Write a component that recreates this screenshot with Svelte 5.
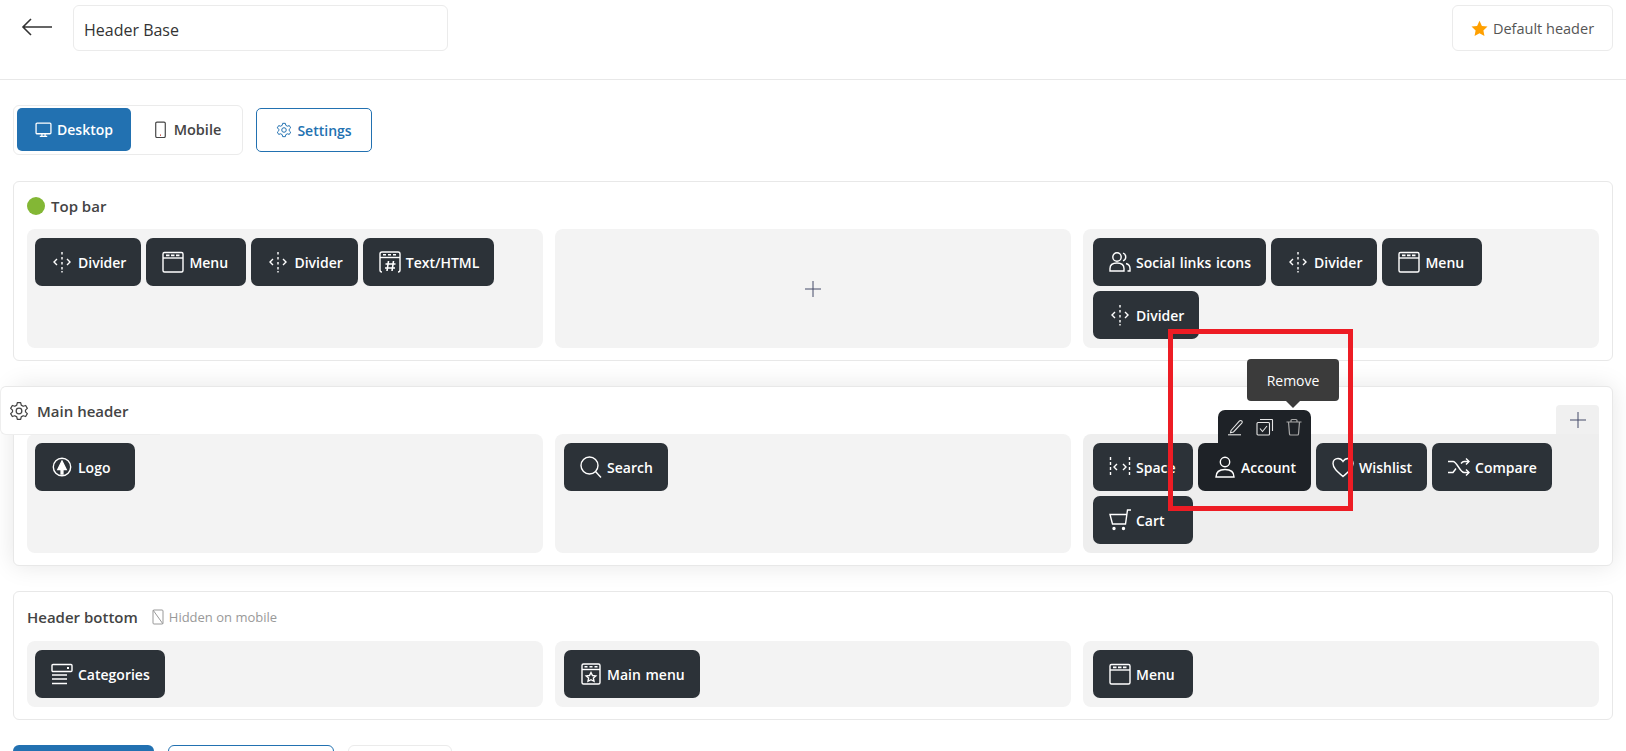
<script>
  // inner svg markup per icon, all on a 24 box
  const icons = {
    divider: '<path d="M12 2v2.5M12 7v2.5M12 12v2.5M12 17v2.5M12 21v1.5" /><path d="M7 9l-3 3 3 3M17 9l3 3-3 3" />',
    menu: '<rect x="2" y="2.500" width="20" height="19.500" rx="1.500" /><path d="M2 8h20" /><path d="M5 5.300h3.500M10 5.300h3.500M15 5.300h3.500" stroke-width="1.800" />',
    text: '<path d="M4 22c-1 0-2-.8-2-2V4c0-1 .8-2 2-2h16c1 0 2 .8 2 2v16c0 1-.8 2-2 2" /><path d="M2 7.500h20" /><path d="M5 4.800h3M10 4.800h3M15 4.800h3" stroke-width="1.500" /><path d="M10.500 11l-1.500 10M15.500 11l-1.500 10M7.500 14h10M7 18h10" stroke-width="1.600" />',
    social: '<circle cx="9" cy="7" r="4.200" /><path d="M2 21v-2.500c0-3.300 2.700-5.500 7-5.500s7 2.200 7 5.500V21z" /><path d="M15 3.200a4 4 0 0 1 0 7.600M18 13.500c2.500.7 4 2.600 4 5V21h-2.500" />',
    logo: '<circle cx="12" cy="12" r="8.700" /><path d="M12 6l-4.200 8.500h3.300V19h1.800v-4.500h3.300z" fill="currentColor" />',
    search: '<circle cx="10.500" cy="10.500" r="8.500" /><path d="M16.500 16.500l5.500 6" />',
    space: '<path d="M2.500 2v20M21.500 2v20" stroke-dasharray="3 2" /><path d="M9 9l-3 3 3 3M15 9l3 3-3 3" />',
    account: '<circle cx="12" cy="7" r="4.700" /><path d="M3 22c0-5 3.500-7.500 9-7.500s9 2.500 9 7.500z" />',
    wishlist: '<path d="M12 21.500C6 16.500 2 13 2 8.500 2 5.500 4.300 3.500 7 3.500c2 0 3.800 1 5 3 1.200-2 3-3 5-3 2.700 0 5 2 5 5 0 4.500-4 8-10 13z" />',
    compare: '<path d="M1 6.500h5c4 0 7 11 11 11h5M1 17.500h5l3-4M14 8.500c1-1.200 2-2 3-2h5" /><path d="M19 3.500l3 3-3 3M19 14.500l3 3-3 3" />',
    cart: '<path d="M23 2h-3.500l-2 14H4.500L2 6.500h16.500" /><circle cx="6" cy="20.500" r="1" fill="currentColor" /><circle cx="15.500" cy="20.500" r="1" fill="currentColor" />',
    categories: '<rect x="2" y="2.500" width="20" height="7" rx="1" /><path d="M17 6h2" stroke-width="2" /><path d="M2 13h15M2 17h15M2 21.500h15" stroke-width="1.600" />',
    mainmenu: '<rect x="3" y="2" width="18" height="20" rx="1.500" /><path d="M3 7.500h18" /><path d="M5.500 4.800h3M10.500 4.800h3M15.500 4.800h3" stroke-width="1.500" /><path d="M12 10.500l1.500 3 3.300.4-2.400 2.200.6 3.200-3-1.600-3 1.600.6-3.200-2.400-2.200 3.300-.4z" />'
  };

  const chip = (label, icon, active = false) => ({ label, icon, active });

  const rows = [
    {
      title: 'Top bar',
      kind: 'dot',
      zones: [
        [chip('Divider', 'divider'), chip('Menu', 'menu'), chip('Divider', 'divider'), chip('Text/HTML', 'text')],
        [],
        [chip('Social links icons', 'social'), chip('Divider', 'divider'), chip('Menu', 'menu'), chip('Divider', 'divider')]
      ]
    },
    {
      title: 'Main header',
      kind: 'gear',
      zones: [
        [chip('Logo', 'logo')],
        [chip('Search', 'search')],
        [chip('Space', 'space'), chip('Account', 'account', true), chip('Wishlist', 'wishlist'), chip('Compare', 'compare'), chip('Cart', 'cart')]
      ]
    },
    {
      title: 'Header bottom',
      kind: 'hidden',
      zones: [
        [chip('Categories', 'categories')],
        [chip('Main menu', 'mainmenu')],
        [chip('Menu', 'menu')]
      ]
    }
  ];
</script>

{#snippet gear(size)}
  <svg width={size} height={size} viewBox="0 0 24 24" fill="none" stroke="currentColor" stroke-width="1.500" stroke-linejoin="round">
    <path d="M10 2h4l.7 3 2.300 1.300 3-.9 2 3.400-2.200 2.100v2.200l2.200 2.100-2 3.400-3-.9-2.300 1.300-.7 3h-4l-.7-3L7 17.700l-3 .9-2-3.400 2.200-2.100V11L2 8.800l2-3.400 3 .9L9.300 5z" />
    <circle cx="12" cy="12" r="3.400" />
  </svg>
{/snippet}

{#snippet plus(size)}
  <svg width={size} height={size} viewBox="0 0 16 16" fill="none" stroke="#454a68" stroke-width="1">
    <path d="M8 0v16M0 8h16" />
  </svg>
{/snippet}

<div class="page">
  <header class="topbar">
    <button class="back" aria-label="Back">
      <svg width="32" height="20" viewBox="0 0 32 20" fill="none" stroke="#333" stroke-width="1.600">
        <path d="M31 10H2M10 2l-8 8 8 8" />
      </svg>
    </button>
    <input class="name" value="Header Base" />
    <button class="default">
      <svg width="17" height="17" viewBox="0 0 24 24" fill="#ffa000">
        <path d="M12 1l3.400 7.300 7.900 1-5.800 5.500 1.500 7.900-7-3.900-7 3.900 1.500-7.900L.7 9.300l7.900-1z" />
      </svg>
      Default header
    </button>
  </header>

  <main class="content">
    <div class="toolbar">
      <div class="tabs">
        <button class="tab on">
          <svg width="17" height="17" viewBox="0 0 16 16" fill="none" stroke="currentColor" stroke-width="1.200">
            <rect x="1" y="2" width="14" height="10" rx="1" />
            <path d="M6.500 12v2M9.500 12v2M4.500 14.500h7" />
          </svg>
          Desktop
        </button>
        <button class="tab">
          <svg width="17" height="17" viewBox="0 0 16 16" fill="none" stroke="#444" stroke-width="1.100">
            <rect x="3.500" y="1" width="9" height="14.500" rx="1.200" />
            <path d="M7.500 13.300h1" stroke="#c0392b" stroke-width="1.200" />
          </svg>
          Mobile
        </button>
      </div>
      <button class="settings">
        {@render gear(16)}
        Settings
      </button>
    </div>

    {#each rows as row}
      <section class="card" class:raised={row.kind === 'gear'}>
        <div class="title" class:tab-title={row.kind === 'gear'} class:tall={row.kind === 'hidden'}>
          {#if row.kind === 'dot'}
            <span class="dot"></span>
          {:else if row.kind === 'gear'}
            {@render gear(20)}
          {/if}
          <span>{row.title}</span>
          {#if row.kind === 'hidden'}
            <span class="note">
              <svg width="14" height="16" viewBox="0 0 14 16" fill="none" stroke="#999" stroke-width="1">
                <rect x="2" y="1" width="10" height="14" rx="1" />
                <path d="M2 1l10 14" />
              </svg>
              Hidden on mobile
            </span>
          {/if}
        </div>
        <div class="zones">
          {#each row.zones as zone, i}
            <div class="zone" class:empty={zone.length === 0} class:hover={row.kind === 'gear' && i === 2}>
              {#if zone.length === 0}
                {@render plus(16)}
              {/if}
              {#each zone as item}
                <div class="chip" class:active={item.active}>
                  <svg class="ico" width="24" height="24" viewBox="0 0 24 24" fill="none" stroke="currentColor" stroke-width="1.400">
                    {@html icons[item.icon]}
                  </svg>
                  <span>{item.label}</span>
                  {#if item.active}
                    <div class="tools">
                      <svg width="18" height="18" viewBox="0 0 18 18" fill="none" stroke="#e6e6e6" stroke-width="1.100">
                        <path d="M4 12.500L12.500 3c.7-.7 1.700-.7 2.300 0 .6.600.6 1.500 0 2.200L6.500 14l-3 .8z" />
                        <path d="M1 16.800h13" />
                      </svg>
                      <svg width="18" height="18" viewBox="0 0 18 18" fill="none" stroke="#e6e6e6" stroke-width="1.100">
                        <rect x="1" y="4.500" width="12.500" height="12.500" rx="1" />
                        <path d="M4 1.500h12c.3 0 .5.200.5.500v11" />
                        <path d="M4 10.500l2.500 3 4.500-5.500" />
                      </svg>
                      <svg width="18" height="18" viewBox="0 0 18 18" fill="none" stroke="#a8a8a8" stroke-width="1.200">
                        <path d="M1.500 4h15M6 4V2.500c0-.5.400-1 1-1h4c.6 0 1 .5 1 1V4M3.500 4l1 12c0 .5.500 1 1 1h7c.5 0 1-.5 1-1l1-12" />
                      </svg>
                      <div class="tip">Remove</div>
                    </div>
                  {/if}
                </div>
              {/each}
              {#if row.kind === 'gear' && i === 2}
                <div class="add">{@render plus(16)}</div>
              {/if}
            </div>
          {/each}
        </div>
      </section>
    {/each}

    <div class="actions">
      <button class="primary" aria-label="Save"></button>
      <button class="outline" aria-label="Save as"></button>
      <button class="plain" aria-label="Cancel"></button>
    </div>
  </main>

  <div class="mark"></div>
</div>

<style>
  :global(body) {
    overflow: hidden;
    background: #fff;
  }

  .page {
    position: relative;
    height: 751px;
    overflow: hidden;
    font-family: "Open Sans", "Noto Sans", sans-serif;
    font-size: 14px;
    color: #444;
  }

  button {
    font: inherit;
    cursor: pointer;
  }

  .topbar {
    height: 80px;
    box-sizing: border-box;
    border-bottom: 1px solid #e8e8e8;
    padding: 5px 13px 0 21px;
    display: flex;
    align-items: flex-start;
  }

  .back {
    border: 0;
    background: none;
    padding: 0 0 2px;
    width: 52px;
    height: 46px;
    text-align: left;
    display: flex;
    align-items: center;
  }

  .name {
    width: 375px;
    height: 46px;
    box-sizing: border-box;
    border: 1px solid #ebebeb;
    border-radius: 6px;
    padding: 3px 10px 0;
    font: inherit;
    font-size: 16px;
    color: #333;
    outline: none;
  }

  .default {
    margin-left: auto;
    width: 161px;
    height: 46px;
    border: 1px solid #ebebeb;
    border-radius: 6px;
    background: #fff;
    color: #555;
    font-size: 14.500px;
    display: flex;
    align-items: center;
    justify-content: center;
    gap: 5px;
    padding: 0;
  }

  .content {
    padding: 25px 13px 0;
  }

  .toolbar {
    display: flex;
    align-items: center;
    gap: 13px;
    margin-bottom: 26px;
  }

  .tabs {
    display: flex;
    box-sizing: border-box;
    width: 230px;
    height: 50px;
    padding: 2px 3px 3px;
    border: 1px solid #ebebeb;
    border-radius: 6px;
  }

  .tab {
    border: 0;
    border-radius: 5px;
    background: #fff;
    color: #444;
    font-weight: 600;
    font-size: 14.500px;
    display: flex;
    align-items: center;
    justify-content: center;
    gap: 5px;
    padding: 0 0 0 3px;
    width: 109px;
  }

  .tab.on {
    width: 115px;
    padding: 0;
    background: #2271b1;
    color: #fff;
    font-size: 14px;
  }

  .settings {
    width: 116px;
    height: 44px;
    border: 1px solid #2271b1;
    border-radius: 5px;
    background: #fff;
    color: #2271b1;
    font-weight: 600;
    display: flex;
    align-items: center;
    justify-content: center;
    gap: 5px;
    padding: 0;
  }

  .card {
    border: 1px solid #e8e8e8;
    border-radius: 6px;
    background: #fff;
    padding: 0 13px 12px;
    margin-bottom: 25px;
  }

  .card.raised {
    box-shadow: 0 0 24px rgba(0, 0, 0, 0.1);
  }

  .title {
    height: 47px;
    display: flex;
    align-items: center;
    gap: 6px;
    font-weight: 600;
    font-size: 15px;
  }

  .title.tall {
    height: 49px;
    gap: 13px;
  }

  .tab-title {
    position: relative;
    z-index: 2;
    margin: -1px 0 0 -27px;
    width: 160px;
    height: 49px;
    box-sizing: border-box;
    padding: 1px 0 0 8px;
    gap: 8px;
    background: #fff;
    border-radius: 6px 0 0 6px;
    border-top: 1px solid #e8e8e8;
    border-left: 1px solid #eee;
    border-bottom: 1px solid #eee;
  }

  .dot {
    width: 18px;
    height: 18px;
    border-radius: 50%;
    background: #83b735;
  }

  .note {
    display: flex;
    align-items: center;
    gap: 4px;
    font-weight: 400;
    font-size: 13px;
    color: #999;
  }

  .zones {
    display: grid;
    grid-template-columns: repeat(3, 1fr);
    gap: 12px;
  }

  .raised .zones {
    margin-top: -1px;
  }

  .zone {
    position: relative;
    background: #f3f3f3;
    border-radius: 8px;
    padding: 9px;
    display: flex;
    flex-wrap: wrap;
    align-items: flex-start;
    align-content: flex-start;
    gap: 5px;
  }

  .zone:first-child {
    padding-left: 8px;
  }

  .zone:last-child {
    padding-left: 10px;
  }

  .zone.hover {
    background: #eee;
    border-top-right-radius: 0;
  }

  .zone.empty {
    align-items: center;
    justify-content: center;
    align-content: center;
  }

  .chip {
    position: relative;
    box-sizing: border-box;
    min-width: 100px;
    height: 48px;
    padding: 0 15px;
    border-radius: 7px;
    background: #2c3238;
    color: #fff;
    font-weight: 600;
    word-spacing: 1px;
    display: flex;
    align-items: center;
    gap: 4px;
  }

  .chip.active {
    background: #1e2227;
    border-top-left-radius: 7px;
    border-top-right-radius: 0;
  }

  .ico {
    flex: none;
  }

  .tools {
    position: absolute;
    right: 0;
    bottom: 100%;
    width: 93px;
    height: 33px;
    box-sizing: border-box;
    background: #1e2227;
    border-radius: 7px 7px 0 0;
    display: flex;
    align-items: center;
    justify-content: center;
    gap: 11px;
  }

  .tip {
    position: absolute;
    left: 29px;
    bottom: 42px;
    width: 92px;
    height: 42px;
    border-radius: 4px;
    background: #3b3b3b;
    color: #fff;
    font-weight: 400;
    font-size: 14px;
    display: flex;
    align-items: center;
    justify-content: center;
  }

  .tip::after {
    content: "";
    position: absolute;
    left: 39px;
    top: 100%;
    border: 7px solid transparent;
    border-top-color: #3b3b3b;
    border-bottom: 0;
  }

  .add {
    position: absolute;
    right: 0;
    top: -29px;
    width: 43px;
    height: 29px;
    background: #f0f0f0;
    border-radius: 4px 4px 0 0;
    display: flex;
    align-items: center;
    justify-content: center;
  }

  .actions {
    display: flex;
    gap: 14px;
  }

  .actions button {
    height: 44px;
    padding: 0;
    border-radius: 6px;
  }

  .primary {
    width: 141px;
    border: 0;
    background: #2271b1;
  }

  .outline {
    width: 166px;
    border: 1px solid #2271b1;
    background: #fff;
  }

  .plain {
    width: 104px;
    border: 1px solid #ebebeb;
    background: #fff;
  }

  /* red annotation box drawn over the screenshot */
  .mark {
    position: absolute;
    left: 1168px;
    top: 329px;
    width: 185px;
    height: 182px;
    box-sizing: border-box;
    border: 5px solid #ed1c24;
    z-index: 5;
    pointer-events: none;
  }
</style>
